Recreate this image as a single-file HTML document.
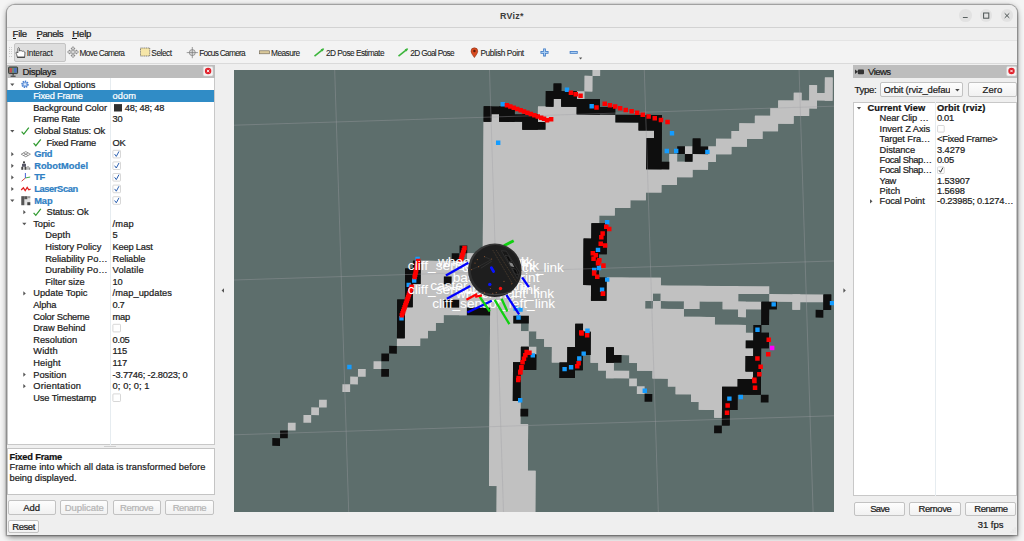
<!DOCTYPE html>
<html><head><meta charset="utf-8"><title>RViz*</title>
<style>
html,body{margin:0;padding:0;}
body{width:1024px;height:541px;overflow:hidden;background:#f4f4f4;font-family:"Liberation Sans",sans-serif;position:relative;}
.t{position:absolute;white-space:nowrap;-webkit-text-stroke:0.22px currentColor;}
.r{position:absolute;}
svg{position:absolute;overflow:visible;}
</style></head><body>
<div class="r" style="left:6.7px;top:5.4px;width:1010.4px;height:529.6px;background:#efefef;border-radius:8px 8px 0 0;box-shadow:0 0 0 1.300px rgba(0,0,0,.25),0 3px 6px -1px rgba(0,0,0,.45),0 0 6px rgba(0,0,0,.2);"></div>
<div class="r" style="left:6.70px;top:5.40px;width:1010.40px;height:21.80px;background:#eeeeee;border-radius:8px 8px 0 0;"></div>
<div class="r" style="left:6.70px;top:27.00px;width:1010.40px;height:0.90px;background:#d2d2d2;"></div>
<div class="t" style="left:500.00px;top:10.00px;height:12px;line-height:12px;font-size:8.9px;letter-spacing:0.274px;color:#3c3c3c;font-weight:bold;-webkit-text-stroke:0;">RViz*</div>
<div class="r" style="left:959.00px;top:9.30px;width:12.6px;height:12.6px;border-radius:50%;background:#e2e2e2;"></div>
<div class="r" style="left:979.90px;top:9.30px;width:12.6px;height:12.6px;border-radius:50%;background:#e2e2e2;"></div>
<div class="r" style="left:1000.70px;top:9.30px;width:12.6px;height:12.6px;border-radius:50%;background:#e2e2e2;"></div>
<svg style="left:0;top:0" width="1024" height="60" viewBox="0 0 1024 60" fill="none" stroke="#4a5252" stroke-width="0.9"><path d="M962.9 17.5h4.8"/><rect x="983.6" y="13.0" width="5.2" height="5.2" stroke-width="1.0"/><path d="M1004.7 13.3l4.6 4.6M1009.3 13.3l-4.6 4.6" stroke-width="1.0"/></svg>
<div class="r" style="left:6.70px;top:27.90px;width:1010.40px;height:12.60px;background:#efefef;"></div>
<div class="t" style="left:12.60px;top:27.90px;height:12px;line-height:12px;font-size:9.6px;letter-spacing:-0.317px;color:#1a1a1a;">File</div>
<div class="t" style="left:36.50px;top:27.90px;height:12px;line-height:12px;font-size:9.6px;letter-spacing:-0.459px;color:#1a1a1a;">Panels</div>
<div class="t" style="left:72.30px;top:27.90px;height:12px;line-height:12px;font-size:9.6px;letter-spacing:-0.211px;color:#1a1a1a;">Help</div>
<div class="r" style="left:12.60px;top:38.30px;width:3.60px;height:0.80px;background:#1a1a1a;"></div>
<div class="r" style="left:36.50px;top:38.30px;width:3.90px;height:0.80px;background:#1a1a1a;"></div>
<div class="r" style="left:72.30px;top:38.30px;width:4.60px;height:0.80px;background:#1a1a1a;"></div>
<div class="r" style="left:6.70px;top:40.60px;width:1010.40px;height:22.60px;background:#f3f3f3;"></div>
<div class="r" style="left:6.70px;top:40.30px;width:1010.40px;height:0.60px;background:#e4e4e4;"></div>
<div class="r" style="left:6.70px;top:63.00px;width:1010.40px;height:0.80px;background:#dadada;"></div>
<div class="r" style="left:9.30px;top:47.40px;width:0.80px;height:10.00px;background:repeating-linear-gradient(#cfcfcf 0 0.900px,transparent 0.900px 1.900px);"></div>
<div class="r" style="left:10.90px;top:47.40px;width:0.80px;height:10.00px;background:repeating-linear-gradient(#cfcfcf 0 0.900px,transparent 0.900px 1.900px);"></div>
<div class="r" style="left:14.20px;top:43.30px;width:51.60px;height:18.40px;background:#dedede;border:0.7px solid #c4c4c4;border-radius:2px;box-sizing:border-box;"></div>
<div class="t" style="left:26.80px;top:46.60px;height:12px;line-height:12px;font-size:8.3px;letter-spacing:-0.235px;color:#222;-webkit-text-stroke:0.08px currentColor;">Interact</div>
<div class="t" style="left:79.60px;top:46.60px;height:12px;line-height:12px;font-size:8.3px;letter-spacing:-0.674px;color:#222;-webkit-text-stroke:0.08px currentColor;">Move Camera</div>
<div class="t" style="left:151.30px;top:46.60px;height:12px;line-height:12px;font-size:8.3px;letter-spacing:-0.445px;color:#222;-webkit-text-stroke:0.08px currentColor;">Select</div>
<div class="t" style="left:199.20px;top:46.60px;height:12px;line-height:12px;font-size:8.3px;letter-spacing:-0.719px;color:#222;-webkit-text-stroke:0.08px currentColor;">Focus Camera</div>
<div class="t" style="left:271.00px;top:46.60px;height:12px;line-height:12px;font-size:8.3px;letter-spacing:-0.527px;color:#222;-webkit-text-stroke:0.08px currentColor;">Measure</div>
<div class="t" style="left:326.00px;top:46.60px;height:12px;line-height:12px;font-size:8.3px;letter-spacing:-0.527px;color:#222;-webkit-text-stroke:0.08px currentColor;">2D Pose Estimate</div>
<div class="t" style="left:410.20px;top:46.60px;height:12px;line-height:12px;font-size:8.3px;letter-spacing:-0.656px;color:#222;-webkit-text-stroke:0.08px currentColor;">2D Goal Pose</div>
<div class="t" style="left:480.40px;top:46.60px;height:12px;line-height:12px;font-size:8.3px;letter-spacing:-0.388px;color:#222;-webkit-text-stroke:0.08px currentColor;">Publish Point</div>
<svg style="left:0;top:0" width="1024" height="70" viewBox="0 0 1024 70"><path d="M17.400 57.300L16.700 54.600L16.000 53.100Q15.900 52.000 17.000 52.100L17.900 53.000V48.300Q18.600 47.000 19.400 48.300V51.000Q20.200 50.000 21.000 51.000Q21.800 50.300 22.600 51.300Q23.500 50.700 24.200 51.800Q25.000 51.600 25.000 52.800L24.600 57.300z" fill="#fff" stroke="#444" stroke-width="0.800" stroke-linejoin="round"/><path d="M17.200 57.300h7.600" stroke="#444" stroke-width="1.200"/><g fill="#e9e9e9" stroke="#555" stroke-width="0.6"><path d="M73 46.6l2 2.200h-1.200v2.300h2.500v-1.100l2.200 2-2.200 2v-1.100h-2.500v2.500h1.200l-2 2.200-2-2.200h1.200v-2.500h-2.500v1.100l-2.200-2 2.200-2v1.100h2.500v-2.300h-1.200z"/></g><rect x="140.500" y="48.0" width="9.200" height="8.0" fill="#f6e6a8" stroke="#555" stroke-width="0.7" stroke-dasharray="1.2 0.600"/><g fill="none" stroke="#777" stroke-width="0.7"><circle cx="192.300" cy="52.6" r="3.0" fill="#ddd"/><path d="M192.300 47v11.200M186.700 52.6h11.200"/></g><rect x="259.500" y="50.8" width="10.0" height="3.0" fill="#d9c89a" stroke="#6a6250" stroke-width="0.6"/><path d="M314.500 56.2l8.800-7" stroke="#3cb53c" stroke-width="1.6" fill="none"/><path d="M324.200 48.300l-3.600.9 2 2.400z" fill="#3cb53c"/><path d="M398.500 56.2l8.800-7" stroke="#3cb53c" stroke-width="1.6" fill="none"/><path d="M408.200 48.300l-3.600.9 2 2.400z" fill="#3cb53c"/><path d="M474.400 57.6q-3.400-4.400-3.400-6.400a3.300 3.300 0 0 1 6.800 0q0 2-3.400 6.400z" fill="#d84a20" stroke="#7a2a10" stroke-width="0.5"/><circle cx="474.400" cy="51.0" r="1.2" fill="#5a1a08"/><path d="M544.500 48.4v8.000M540.500 52.4h8.000" stroke="#3a77c4" stroke-width="2.700" fill="none"/><path d="M544.500 49.2v6.400M541.300 52.4h6.400" stroke="#a9cdf2" stroke-width="1.200" fill="none"/><path d="M569.700 52.4h8.000" stroke="#3a77c4" stroke-width="2.700" fill="none"/><path d="M570.500 52.4h6.400" stroke="#a9cdf2" stroke-width="1.200" fill="none"/><path d="M579.0 57.6h3.200l-1.600 1.800z" fill="#555"/></svg>
<div class="r" style="left:6.90px;top:65.00px;width:207.70px;height:13.40px;background:#bdbdbd;"></div>
<div class="t" style="left:22.40px;top:65.90px;height:12px;line-height:12px;font-size:9.6px;letter-spacing:-0.334px;color:#1a1a1a;">Displays</div>
<svg style="left:0;top:0" width="240" height="90" viewBox="0 0 240 90"><rect x="8.6" y="67.0" width="9.0" height="6.6" rx="0.8" fill="#6a8a7a" stroke="#2a2a2a" stroke-width="0.9"/><rect x="9.600" y="68.0" width="2.400" height="4.600" fill="#c05050"/><rect x="14.0" y="68.0" width="2.600" height="4.600" fill="#5070c0"/><path d="M13.100 73.800v1.800M10.600 76.200h5" stroke="#2a2a2a" stroke-width="1.0"/><rect x="203.200" y="66.6" width="9.800" height="9.400" rx="1.4" fill="#f4f4f4" stroke="#cfcfcf" stroke-width="0.5"/><circle cx="208.100" cy="71.0" r="3.200" fill="#e0202a"/><path d="M206.900 69.800l2.400 2.400M209.300 69.800l-2.400 2.400" stroke="#fff" stroke-width="0.900"/></svg>
<div class="r" style="left:6.90px;top:78.40px;width:207.70px;height:366.80px;background:#ffffff;border:0.6px solid #c8c8c8;border-top:none;box-sizing:border-box;"></div>
<div class="r" style="left:110.40px;top:78.40px;width:0.70px;height:366.40px;background:#e6ecf0;"></div>
<div class="r" style="left:7.20px;top:90.20px;width:207.00px;height:11.60px;background:#308cc6;"></div>
<div class="t" style="left:34.20px;top:78.60px;height:12px;line-height:12px;font-size:9.3px;letter-spacing:-0.015px;color:#1b1b1b;">Global Options</div>
<div class="t" style="left:33.20px;top:90.20px;height:12px;line-height:12px;font-size:9.3px;letter-spacing:-0.254px;color:#ffffff;">Fixed Frame</div>
<div class="t" style="left:112.60px;top:90.20px;height:12px;line-height:12px;font-size:9.3px;letter-spacing:0.085px;color:#fff;">odom</div>
<div class="t" style="left:33.20px;top:101.80px;height:12px;line-height:12px;font-size:9.3px;letter-spacing:-0.040px;color:#1b1b1b;">Background Color</div>
<div class="t" style="left:124.80px;top:101.80px;height:12px;line-height:12px;font-size:9.3px;letter-spacing:-0.196px;color:#1b1b1b;">48; 48; 48</div>
<div class="t" style="left:33.20px;top:113.40px;height:12px;line-height:12px;font-size:9.3px;letter-spacing:-0.249px;color:#1b1b1b;">Frame Rate</div>
<div class="t" style="left:112.60px;top:113.40px;height:12px;line-height:12px;font-size:9.3px;letter-spacing:-0.372px;color:#1b1b1b;">30</div>
<div class="t" style="left:34.20px;top:125.00px;height:12px;line-height:12px;font-size:9.3px;letter-spacing:-0.111px;color:#1b1b1b;">Global Status: Ok</div>
<div class="t" style="left:46.60px;top:136.60px;height:12px;line-height:12px;font-size:9.3px;letter-spacing:-0.254px;color:#1b1b1b;">Fixed Frame</div>
<div class="t" style="left:112.60px;top:136.60px;height:12px;line-height:12px;font-size:9.3px;letter-spacing:-0.419px;color:#1b1b1b;">OK</div>
<div class="t" style="left:34.20px;top:148.20px;height:12px;line-height:12px;font-size:9.3px;letter-spacing:-0.279px;color:#2f7fc4;font-weight:bold;">Grid</div>
<div class="t" style="left:34.20px;top:159.80px;height:12px;line-height:12px;font-size:9.3px;letter-spacing:0.008px;color:#2f7fc4;font-weight:bold;">RobotModel</div>
<div class="t" style="left:34.20px;top:171.40px;height:12px;line-height:12px;font-size:9.3px;letter-spacing:-0.380px;color:#2f7fc4;font-weight:bold;">TF</div>
<div class="t" style="left:34.20px;top:183.00px;height:12px;line-height:12px;font-size:9.3px;letter-spacing:-0.382px;color:#2f7fc4;font-weight:bold;">LaserScan</div>
<div class="t" style="left:34.20px;top:194.60px;height:12px;line-height:12px;font-size:9.3px;letter-spacing:-0.066px;color:#2f7fc4;font-weight:bold;">Map</div>
<div class="t" style="left:46.60px;top:206.20px;height:12px;line-height:12px;font-size:9.3px;letter-spacing:-0.162px;color:#1b1b1b;">Status: Ok</div>
<div class="t" style="left:33.20px;top:217.80px;height:12px;line-height:12px;font-size:9.3px;letter-spacing:-0.022px;color:#1b1b1b;">Topic</div>
<div class="t" style="left:112.60px;top:217.80px;height:12px;line-height:12px;font-size:9.3px;letter-spacing:0.132px;color:#1b1b1b;">/map</div>
<div class="t" style="left:45.20px;top:229.40px;height:12px;line-height:12px;font-size:9.3px;letter-spacing:0.117px;color:#1b1b1b;">Depth</div>
<div class="t" style="left:112.60px;top:229.40px;height:12px;line-height:12px;font-size:9.3px;color:#1b1b1b;">5</div>
<div class="t" style="left:45.20px;top:241.00px;height:12px;line-height:12px;font-size:9.3px;letter-spacing:-0.009px;color:#1b1b1b;">History Policy</div>
<div class="t" style="left:112.60px;top:241.00px;height:12px;line-height:12px;font-size:9.3px;letter-spacing:-0.209px;color:#1b1b1b;">Keep Last</div>
<div class="t" style="left:45.20px;top:252.60px;height:12px;line-height:12px;font-size:9.3px;letter-spacing:-0.044px;color:#1b1b1b;">Reliability Po…</div>
<div class="t" style="left:112.60px;top:252.60px;height:12px;line-height:12px;font-size:9.3px;letter-spacing:-0.125px;color:#1b1b1b;">Reliable</div>
<div class="t" style="left:45.20px;top:264.20px;height:12px;line-height:12px;font-size:9.3px;letter-spacing:0.027px;color:#1b1b1b;">Durability Po…</div>
<div class="t" style="left:112.60px;top:264.20px;height:12px;line-height:12px;font-size:9.3px;letter-spacing:0.151px;color:#1b1b1b;">Volatile</div>
<div class="t" style="left:45.20px;top:275.80px;height:12px;line-height:12px;font-size:9.3px;letter-spacing:-0.017px;color:#1b1b1b;">Filter size</div>
<div class="t" style="left:112.60px;top:275.80px;height:12px;line-height:12px;font-size:9.3px;letter-spacing:-0.372px;color:#1b1b1b;">10</div>
<div class="t" style="left:33.20px;top:287.40px;height:12px;line-height:12px;font-size:9.3px;letter-spacing:0.007px;color:#1b1b1b;">Update Topic</div>
<div class="t" style="left:112.60px;top:287.40px;height:12px;line-height:12px;font-size:9.3px;letter-spacing:0.039px;color:#1b1b1b;">/map_updates</div>
<div class="t" style="left:33.20px;top:299.00px;height:12px;line-height:12px;font-size:9.3px;letter-spacing:-0.117px;color:#1b1b1b;">Alpha</div>
<div class="t" style="left:112.60px;top:299.00px;height:12px;line-height:12px;font-size:9.3px;letter-spacing:-0.376px;color:#1b1b1b;">0.7</div>
<div class="t" style="left:33.20px;top:310.60px;height:12px;line-height:12px;font-size:9.3px;letter-spacing:-0.210px;color:#1b1b1b;">Color Scheme</div>
<div class="t" style="left:112.60px;top:310.60px;height:12px;line-height:12px;font-size:9.3px;letter-spacing:-0.230px;color:#1b1b1b;">map</div>
<div class="t" style="left:33.20px;top:322.20px;height:12px;line-height:12px;font-size:9.3px;letter-spacing:-0.095px;color:#1b1b1b;">Draw Behind</div>
<div class="t" style="left:33.20px;top:333.80px;height:12px;line-height:12px;font-size:9.3px;letter-spacing:0.006px;color:#1b1b1b;">Resolution</div>
<div class="t" style="left:112.60px;top:333.80px;height:12px;line-height:12px;font-size:9.3px;letter-spacing:-0.325px;color:#1b1b1b;">0.05</div>
<div class="t" style="left:33.20px;top:345.40px;height:12px;line-height:12px;font-size:9.3px;letter-spacing:0.166px;color:#1b1b1b;">Width</div>
<div class="t" style="left:112.60px;top:345.40px;height:12px;line-height:12px;font-size:9.3px;letter-spacing:-0.075px;color:#1b1b1b;">115</div>
<div class="t" style="left:33.20px;top:357.00px;height:12px;line-height:12px;font-size:9.3px;letter-spacing:0.086px;color:#1b1b1b;">Height</div>
<div class="t" style="left:112.60px;top:357.00px;height:12px;line-height:12px;font-size:9.3px;letter-spacing:-0.075px;color:#1b1b1b;">117</div>
<div class="t" style="left:33.20px;top:368.60px;height:12px;line-height:12px;font-size:9.3px;letter-spacing:0.014px;color:#1b1b1b;">Position</div>
<div class="t" style="left:112.60px;top:368.60px;height:12px;line-height:12px;font-size:9.3px;letter-spacing:-0.189px;color:#1b1b1b;">-3.7746; -2.8023; 0</div>
<div class="t" style="left:33.20px;top:380.20px;height:12px;line-height:12px;font-size:9.3px;letter-spacing:0.228px;color:#1b1b1b;">Orientation</div>
<div class="t" style="left:112.60px;top:380.20px;height:12px;line-height:12px;font-size:9.3px;letter-spacing:0.081px;color:#1b1b1b;">0; 0; 0; 1</div>
<div class="t" style="left:33.20px;top:391.80px;height:12px;line-height:12px;font-size:9.3px;letter-spacing:-0.123px;color:#1b1b1b;">Use Timestamp</div>
<svg style="left:0;top:0" width="240" height="460" viewBox="0 0 240 460"><path d="M10.20 83.60h4.2l-2.100 2.500z" fill="#555"/><circle cx="25.0" cy="84.30" r="2.900" fill="#8fb4e6" stroke="#4a7fd0" stroke-width="1.700" stroke-dasharray="1.300 0.900"/><circle cx="25.0" cy="84.30" r="1.0" fill="#e8f0fc"/><rect x="114.0" y="104.10" width="8.0" height="7.400" fill="#303030"/><path d="M10.20 130.00h4.2l-2.100 2.500z" fill="#555"/><path d="M21.60 131.60l2.200 2.500 5.000-6.400" fill="none" stroke="#2f9a2f" stroke-width="1.25"/><path d="M33.60 143.20l2.200 2.500 5.000-6.400" fill="none" stroke="#2f9a2f" stroke-width="1.25"/><path d="M11.30 152.10v4.200l2.500-2.100z" fill="#555"/><rect x="112.90" y="150.30" width="7.600" height="7.600" rx="0.800" fill="#fff" stroke="#c6c6c6" stroke-width="0.700"/><path d="M114.60 154.10l1.700 2.300 2.700-5.000" fill="none" stroke="#2a5fb0" stroke-width="1.0"/><g fill="none" stroke="#555" stroke-width="0.600"><path d="M21.2 154.20l4.600-2.600 4.600 2.600-4.600 2.600z"/><path d="M23.500 152.90l4.600 2.600M28.100 152.90l-4.600 2.600"/></g><path d="M11.30 163.70v4.200l2.500-2.100z" fill="#555"/><rect x="112.90" y="161.90" width="7.600" height="7.600" rx="0.800" fill="#fff" stroke="#c6c6c6" stroke-width="0.700"/><path d="M114.60 165.70l1.700 2.300 2.700-5.000" fill="none" stroke="#2a5fb0" stroke-width="1.0"/><g fill="#444"><rect x="23.0" y="161.40" width="2.0" height="2.0"/><rect x="22.0" y="163.80" width="4.0" height="3.0" fill="#5a5a6a"/><rect x="21.3" y="166.80" width="2.0" height="3.0"/><rect x="24.500" y="166.80" width="2.0" height="3.0"/><rect x="27.500" y="166.00" width="1.0" height="3.800" fill="#777"/><rect x="29.2" y="167.40" width="1.0" height="2.400" fill="#777"/></g><path d="M11.30 175.30v4.200l2.500-2.100z" fill="#555"/><rect x="112.90" y="173.50" width="7.600" height="7.600" rx="0.800" fill="#fff" stroke="#c6c6c6" stroke-width="0.700"/><path d="M114.60 177.30l1.700 2.300 2.700-5.000" fill="none" stroke="#2a5fb0" stroke-width="1.0"/><g fill="none" stroke-width="0.900"><path d="M25.400 178.00l-3.800 3.200" stroke="#d03030"/><path d="M25.400 178.00l4.800-1.000" stroke="#30a030"/><path d="M25.400 178.00v-5.000" stroke="#3050d0"/></g><path d="M11.30 186.90v4.200l2.500-2.100z" fill="#555"/><rect x="112.90" y="185.10" width="7.600" height="7.600" rx="0.800" fill="#fff" stroke="#c6c6c6" stroke-width="0.700"/><path d="M114.60 188.90l1.700 2.300 2.700-5.000" fill="none" stroke="#2a5fb0" stroke-width="1.0"/><path d="M21.2 190.00l2.200-2.200 1.800 2.800 2.000-3.200 1.600 2.400 1.800-0.600" fill="none" stroke="#e02020" stroke-width="1.300"/><path d="M10.20 199.60h4.2l-2.100 2.500z" fill="#555"/><rect x="112.90" y="196.70" width="7.600" height="7.600" rx="0.800" fill="#fff" stroke="#c6c6c6" stroke-width="0.700"/><path d="M114.60 200.50l1.700 2.300 2.700-5.000" fill="none" stroke="#2a5fb0" stroke-width="1.0"/><g><rect x="21.3" y="196.20" width="9.0" height="9.0" fill="#e0e0e0"/><rect x="21.3" y="196.20" width="3.0" height="9.0" fill="#555"/><rect x="24.300" y="196.20" width="3.0" height="3.0" fill="#555"/><rect x="27.300" y="202.20" width="3.0" height="3.0" fill="#444"/><rect x="27.300" y="196.20" width="3.0" height="2.0" fill="#999"/></g><path d="M23.30 210.10v4.200l2.500-2.100z" fill="#555"/><path d="M33.60 212.80l2.200 2.500 5.000-6.400" fill="none" stroke="#2f9a2f" stroke-width="1.25"/><path d="M22.20 222.80h4.2l-2.100 2.500z" fill="#555"/><path d="M23.30 291.30v4.200l2.500-2.100z" fill="#555"/><rect x="112.90" y="324.30" width="7.600" height="7.600" rx="0.800" fill="#fff" stroke="#c6c6c6" stroke-width="0.700"/><path d="M23.30 372.50v4.200l2.500-2.100z" fill="#555"/><path d="M23.30 384.10v4.200l2.500-2.100z" fill="#555"/><rect x="112.90" y="393.90" width="7.600" height="7.600" rx="0.800" fill="#fff" stroke="#c6c6c6" stroke-width="0.700"/></svg>
<div class="r" style="left:104.00px;top:446.40px;width:12.00px;height:0.70px;background:#cfcfcf;"></div>
<div class="r" style="left:6.90px;top:448.40px;width:208.10px;height:46.40px;background:#ffffff;border:0.6px solid #c4c4c4;box-sizing:border-box;"></div>
<div class="t" style="left:9.50px;top:450.70px;height:12px;line-height:12px;font-size:9.3px;letter-spacing:-0.199px;color:#111;font-weight:bold;">Fixed Frame</div>
<div class="t" style="left:9.50px;top:461.20px;height:12px;line-height:12px;font-size:9.3px;letter-spacing:0.046px;color:#1b1b1b;">Frame into which all data is transformed before</div>
<div class="t" style="left:9.50px;top:471.70px;height:12px;line-height:12px;font-size:9.3px;letter-spacing:-0.013px;color:#1b1b1b;">being displayed.</div>
<div class="r" style="left:7.70px;top:500.20px;width:47.90px;height:14.40px;background:linear-gradient(#fdfdfd,#f1f1f1);border:0.7px solid #c2c2c2;border-radius:2px;box-sizing:border-box;"></div>
<div class="t" style="left:23.35px;top:501.50px;height:12px;line-height:12px;font-size:9.5px;letter-spacing:-0.101px;color:#1b1b1b;">Add</div>
<div class="r" style="left:60.00px;top:500.20px;width:48.40px;height:14.40px;background:linear-gradient(#fdfdfd,#f1f1f1);border:0.7px solid #c2c2c2;border-radius:2px;box-sizing:border-box;"></div>
<div class="t" style="left:64.70px;top:501.50px;height:12px;line-height:12px;font-size:9.5px;letter-spacing:-0.067px;color:#b4b4b4;">Duplicate</div>
<div class="r" style="left:112.50px;top:500.20px;width:48.10px;height:14.40px;background:linear-gradient(#fdfdfd,#f1f1f1);border:0.7px solid #c2c2c2;border-radius:2px;box-sizing:border-box;"></div>
<div class="t" style="left:120.05px;top:501.50px;height:12px;line-height:12px;font-size:9.5px;letter-spacing:-0.395px;color:#b4b4b4;">Remove</div>
<div class="r" style="left:165.00px;top:500.20px;width:48.70px;height:14.40px;background:linear-gradient(#fdfdfd,#f1f1f1);border:0.7px solid #c2c2c2;border-radius:2px;box-sizing:border-box;"></div>
<div class="t" style="left:172.65px;top:501.50px;height:12px;line-height:12px;font-size:9.5px;letter-spacing:-0.418px;color:#b4b4b4;">Rename</div>
<div class="r" style="left:7.70px;top:519.60px;width:31.80px;height:13.70px;background:linear-gradient(#fdfdfd,#f1f1f1);border:0.7px solid #c2c2c2;border-radius:2px;box-sizing:border-box;"></div>
<div class="t" style="left:12.30px;top:520.55px;height:12px;line-height:12px;font-size:9.5px;letter-spacing:-0.443px;color:#1b1b1b;">Reset</div>
<svg style="left:0;top:0" width="1024" height="541" viewBox="0 0 1024 541"><path d="M224.0 288.300v4.400l-2.400-2.200z" fill="#555"/><path d="M843.4 288.300v4.400l2.400-2.200z" fill="#555"/></svg>
<div class="r" style="left:852.60px;top:65.00px;width:164.50px;height:13.40px;background:#bdbdbd;"></div>
<div class="t" style="left:868.00px;top:65.90px;height:12px;line-height:12px;font-size:9.6px;letter-spacing:-0.567px;color:#1a1a1a;">Views</div>
<svg style="left:0;top:0" width="1024" height="110" viewBox="0 0 1024 110"><rect x="857.8" y="69.4" width="6.2" height="4.800" rx="1.0" fill="#333"/><path d="M855.0 69.6l3.000 2.200-3.000 2.200z" fill="#333"/><rect x="1006.6" y="66.6" width="9.800" height="9.400" rx="1.4" fill="#f4f4f4" stroke="#cfcfcf" stroke-width="0.5"/><circle cx="1011.5" cy="71.0" r="3.200" fill="#e0202a"/><path d="M1010.3 69.800l2.400 2.400M1012.7 69.800l-2.400 2.400" stroke="#fff" stroke-width="0.900"/><path d="M948.6 89.0h4.200l-2.100 2.400z" fill="#444"/></svg>
<div class="t" style="left:854.60px;top:84.00px;height:12px;line-height:12px;font-size:9.5px;letter-spacing:-0.327px;color:#1b1b1b;">Type:</div>
<div class="r" style="left:880.40px;top:82.40px;width:83.00px;height:14.60px;background:linear-gradient(#fefefe,#f2f2f2);border:0.7px solid #c2c2c2;border-radius:2px;box-sizing:border-box;"></div>
<div class="t" style="left:883.60px;top:84.00px;height:12px;line-height:12px;font-size:9.5px;letter-spacing:-0.206px;color:#1b1b1b;width:66.6px;overflow:hidden;">Orbit (rviz_default)</div>
<svg style="left:0;top:0" width="1024" height="110" viewBox="0 0 1024 110"><path d="M955.2 89.0h4.4l-2.2 2.500z" fill="#444"/></svg>
<div class="r" style="left:968.00px;top:82.40px;width:48.80px;height:14.60px;background:linear-gradient(#fdfdfd,#f1f1f1);border:0.7px solid #c2c2c2;border-radius:2px;box-sizing:border-box;"></div>
<div class="t" style="left:982.60px;top:83.80px;height:12px;line-height:12px;font-size:9.5px;letter-spacing:0.017px;color:#1b1b1b;">Zero</div>
<div class="r" style="left:852.60px;top:101.80px;width:164.50px;height:394.60px;background:#ffffff;border:0.6px solid #c8c8c8;box-sizing:border-box;"></div>
<div class="r" style="left:934.90px;top:102.40px;width:0.70px;height:393.60px;background:#e6ecf0;"></div>
<div class="t" style="left:867.60px;top:102.08px;height:12px;line-height:12px;font-size:9.3px;letter-spacing:0.034px;color:#111;font-weight:bold;">Current View</div>
<div class="t" style="left:937.00px;top:102.08px;height:12px;line-height:12px;font-size:9.3px;letter-spacing:0.115px;color:#111;font-weight:bold;">Orbit (rviz)</div>
<div class="t" style="left:879.60px;top:112.44px;height:12px;line-height:12px;font-size:9.3px;letter-spacing:-0.149px;color:#1b1b1b;">Near Clip …</div>
<div class="t" style="left:937.00px;top:112.44px;height:12px;line-height:12px;font-size:9.3px;letter-spacing:-0.325px;color:#1b1b1b;">0.01</div>
<div class="t" style="left:879.60px;top:122.80px;height:12px;line-height:12px;font-size:9.3px;letter-spacing:-0.043px;color:#1b1b1b;">Invert Z Axis</div>
<div class="t" style="left:879.60px;top:133.16px;height:12px;line-height:12px;font-size:9.3px;letter-spacing:-0.098px;color:#1b1b1b;">Target Fra…</div>
<div class="t" style="left:937.00px;top:133.16px;height:12px;line-height:12px;font-size:9.3px;letter-spacing:-0.204px;color:#1b1b1b;">&lt;Fixed Frame&gt;</div>
<div class="t" style="left:879.60px;top:143.52px;height:12px;line-height:12px;font-size:9.3px;letter-spacing:-0.098px;color:#1b1b1b;">Distance</div>
<div class="t" style="left:937.00px;top:143.52px;height:12px;line-height:12px;font-size:9.3px;letter-spacing:-0.074px;color:#1b1b1b;">3.4279</div>
<div class="t" style="left:879.60px;top:153.88px;height:12px;line-height:12px;font-size:9.3px;letter-spacing:-0.377px;color:#1b1b1b;">Focal Shap…</div>
<div class="t" style="left:937.00px;top:153.88px;height:12px;line-height:12px;font-size:9.3px;letter-spacing:-0.325px;color:#1b1b1b;">0.05</div>
<div class="t" style="left:879.60px;top:164.24px;height:12px;line-height:12px;font-size:9.3px;letter-spacing:-0.377px;color:#1b1b1b;">Focal Shap…</div>
<div class="t" style="left:879.60px;top:174.60px;height:12px;line-height:12px;font-size:9.3px;letter-spacing:-0.334px;color:#1b1b1b;">Yaw</div>
<div class="t" style="left:937.00px;top:174.60px;height:12px;line-height:12px;font-size:9.3px;letter-spacing:-0.116px;color:#1b1b1b;">1.53907</div>
<div class="t" style="left:879.60px;top:184.96px;height:12px;line-height:12px;font-size:9.3px;letter-spacing:-0.015px;color:#1b1b1b;">Pitch</div>
<div class="t" style="left:937.00px;top:184.96px;height:12px;line-height:12px;font-size:9.3px;letter-spacing:-0.107px;color:#1b1b1b;">1.5698</div>
<div class="t" style="left:879.60px;top:195.32px;height:12px;line-height:12px;font-size:9.3px;letter-spacing:-0.138px;color:#1b1b1b;">Focal Point</div>
<div class="t" style="left:937.00px;top:195.32px;height:12px;line-height:12px;font-size:9.3px;letter-spacing:-0.189px;color:#1b1b1b;">-0.23985; 0.1274…</div>
<svg style="left:0;top:0" width="1024" height="541" viewBox="0 0 1024 541"><path d="M856.90 107.08h4.2l-2.100 2.500z" fill="#555"/><rect x="937.6" y="125.50" width="6.600" height="6.600" rx="0.700" fill="#fff" stroke="#c6c6c6" stroke-width="0.700"/><rect x="937.6" y="166.94" width="6.600" height="6.600" rx="0.700" fill="#fff" stroke="#c6c6c6" stroke-width="0.700"/><path d="M939.0 170.24l1.500 2.000 2.400-4.600" fill="none" stroke="#222" stroke-width="0.900"/><path d="M870.00 199.22v4.200l2.500-2.100z" fill="#555"/></svg>
<div class="r" style="left:854.00px;top:501.50px;width:51.40px;height:14.40px;background:linear-gradient(#fdfdfd,#f1f1f1);border:0.7px solid #c2c2c2;border-radius:2px;box-sizing:border-box;"></div>
<div class="t" style="left:870.20px;top:502.80px;height:12px;line-height:12px;font-size:9.5px;letter-spacing:-0.663px;color:#1b1b1b;">Save</div>
<div class="r" style="left:909.30px;top:501.50px;width:51.30px;height:14.40px;background:linear-gradient(#fdfdfd,#f1f1f1);border:0.7px solid #c2c2c2;border-radius:2px;box-sizing:border-box;"></div>
<div class="t" style="left:918.45px;top:502.80px;height:12px;line-height:12px;font-size:9.5px;letter-spacing:-0.395px;color:#1b1b1b;">Remove</div>
<div class="r" style="left:965.30px;top:501.50px;width:51.20px;height:14.40px;background:linear-gradient(#fdfdfd,#f1f1f1);border:0.7px solid #c2c2c2;border-radius:2px;box-sizing:border-box;"></div>
<div class="t" style="left:974.20px;top:502.80px;height:12px;line-height:12px;font-size:9.5px;letter-spacing:-0.418px;color:#1b1b1b;">Rename</div>
<div class="t" style="left:977.80px;top:518.60px;height:12px;line-height:12px;font-size:9.5px;letter-spacing:-0.046px;color:#1b1b1b;">31 fps</div>
<svg style="left:0;top:0" width="1024" height="541" viewBox="0 0 1024 541"><g fill="#d8d8d8"><rect x="1014.6" y="527.6" width="1" height="1"/><rect x="1012.6" y="529.6" width="1" height="1"/><rect x="1014.6" y="529.6" width="1" height="1"/><rect x="1010.6" y="531.6" width="1" height="1"/><rect x="1012.6" y="531.6" width="1" height="1"/><rect x="1014.6" y="531.6" width="1" height="1"/></g></svg>
<div class="r" style="left:234.00px;top:70.00px;width:599.70px;height:441.50px;background:#5d6e6c;"></div>
<svg style="left:234.0px;top:70.0px;overflow:hidden" width="599.7" height="441.5" viewBox="234.0 70.0 599.7 441.5"><rect x="234.0" y="70.0" width="599.7" height="441.5" fill="#5d6e6c"/><g transform="translate(235.97 65.85) rotate(0.372)"><path d="M356.5 0h7.75v7.75h-7.75zM348.75 7.75h7.75v7.75h-7.75zM589 7.75h7.75v7.75h-7.75zM348.75 15.5h7.75v7.75h-7.75zM573.5 15.5h7.75v7.75h-7.75zM589 15.5h7.75v7.75h-7.75zM341 23.25h7.75v7.75h-7.75zM558 23.25h7.75v7.75h-7.75zM573.5 23.25h23.25v7.75h-23.25zM317.75 31h7.75v7.75h-7.75zM542.5 31h38.75v7.75h-38.75zM302.25 38.75h38.75v7.75h-38.75zM534.75 38.75h38.75v7.75h-38.75zM255.75 46.5h7.75v7.75h-7.75zM302.25 46.5h77.5v7.75h-77.5zM519.25 46.5h38.75v7.75h-38.75zM248 54.25h38.75v7.75h-38.75zM310 54.25h93v7.75h-93zM503.75 54.25h38.75v7.75h-38.75zM248 62h170.5v7.75h-170.5zM496 62h31v7.75h-31zM248 69.75h162.75v7.75h-162.75zM480.5 69.75h31v7.75h-31zM248 77.5h162.75v7.75h-162.75zM449.5 77.5h7.75v7.75h-7.75zM472.75 77.5h23.25v7.75h-23.25zM248 85.25h162.75v7.75h-162.75zM434 85.25h7.75v7.75h-7.75zM457.25 85.25h23.25v7.75h-23.25zM248 93h162.75v7.75h-162.75zM434 93h38.75v7.75h-38.75zM248 100.75h209.25v7.75h-209.25zM248 108.5h193.75v7.75h-193.75zM248 116.25h178.25v7.75h-178.25zM248 124h162.75v7.75h-162.75zM248 131.75h147.25v7.75h-147.25zM248 139.5h131.75v7.75h-131.75zM248 147.25h116.25v7.75h-116.25zM248 155h108.5v7.75h-108.5zM248 162.75h108.5v7.75h-108.5zM248 170.5h100.75v7.75h-100.75zM248 178.25h100.75v7.75h-100.75zM232.5 186h116.25v7.75h-116.25zM186 193.75h162.75v7.75h-162.75zM186 201.5h162.75v7.75h-162.75zM186 209.25h23.25v7.75h-23.25zM217 209.25h131.75v7.75h-131.75zM372 209.25h54.25v7.75h-54.25zM178.25 217h178.25v7.75h-178.25zM372 217h162.75v7.75h-162.75zM178.25 224.75h178.25v7.75h-178.25zM372 224.75h46.5v7.75h-46.5zM426.25 224.75h77.5v7.75h-77.5zM534.75 224.75h54.25v7.75h-54.25zM178.25 232.5h31v7.75h-31zM224.75 232.5h186v7.75h-186zM418.5 232.5h7.75v7.75h-7.75zM449.5 232.5h15.5v7.75h-15.5zM488.25 232.5h38.75v7.75h-38.75zM558 232.5h7.75v7.75h-7.75zM170.5 240.25h62v7.75h-62zM255.75 240.25h193.75v7.75h-193.75zM503.75 240.25h7.75v7.75h-7.75zM170.5 248h38.75v7.75h-38.75zM255.75 248h23.25v7.75h-23.25zM294.5 248h186v7.75h-186zM170.5 255.75h31v7.75h-31zM255.75 255.75h31v7.75h-31zM294.5 255.75h46.5v7.75h-46.5zM348.75 255.75h162.75v7.75h-162.75zM170.5 263.5h23.25v7.75h-23.25zM255.75 263.5h38.75v7.75h-38.75zM302.25 263.5h38.75v7.75h-38.75zM356.5 263.5h162.75v7.75h-162.75zM162.75 271.25h23.25v7.75h-23.25zM255.75 271.25h38.75v7.75h-38.75zM310 271.25h31v7.75h-31zM356.5 271.25h155v7.75h-155zM255.75 279h31v7.75h-31zM294.5 279h7.75v7.75h-7.75zM317.75 279h15.5v7.75h-15.5zM356.5 279h15.5v7.75h-15.5zM379.75 279h139.5v7.75h-139.5zM255.75 286.75h31v7.75h-31zM317.75 286.75h15.5v7.75h-15.5zM356.5 286.75h15.5v7.75h-15.5zM395.25 286.75h116.25v7.75h-116.25zM139.5 294.5h7.75v7.75h-7.75zM255.75 294.5h23.25v7.75h-23.25zM364.25 294.5h15.5v7.75h-15.5zM403 294.5h108.5v7.75h-108.5zM124 302.25h7.75v7.75h-7.75zM255.75 302.25h23.25v7.75h-23.25zM372 302.25h23.25v7.75h-23.25zM418.5 302.25h100.75v7.75h-100.75zM116.25 310h7.75v7.75h-7.75zM255.75 310h23.25v7.75h-23.25zM395.25 310h7.75v7.75h-7.75zM434 310h69.75v7.75h-69.75zM108.5 317.75h7.75v7.75h-7.75zM255.75 317.75h23.25v7.75h-23.25zM403 317.75h7.75v7.75h-7.75zM441.75 317.75h46.5v7.75h-46.5zM255.75 325.5h23.25v7.75h-23.25zM457.25 325.5h31v7.75h-31zM85.25 333.25h7.75v7.75h-7.75zM255.75 333.25h31v7.75h-31zM465 333.25h23.25v7.75h-23.25zM77.5 341h7.75v7.75h-7.75zM255.75 341h31v7.75h-31zM480.5 341h7.75v7.75h-7.75zM69.75 348.75h7.75v7.75h-7.75zM255.75 348.75h31v7.75h-31zM54.25 356.5h7.75v7.75h-7.75zM255.75 356.5h38.75v7.75h-38.75zM255.75 364.25h38.75v7.75h-38.75zM255.75 372h38.75v7.75h-38.75zM255.75 379.75h38.75v7.75h-38.75zM255.75 387.5h38.75v7.75h-38.75zM255.75 395.25h38.75v7.75h-38.75zM255.75 403h46.5v7.75h-46.5zM255.75 410.75h46.5v7.75h-46.5zM263.5 418.5h38.75v7.75h-38.75zM263.5 426.25h38.75v7.75h-38.75zM263.5 434h38.75v7.75h-38.75zM263.5 441.75h38.75v7.75h-38.75zM263.5 449.5h38.75v7.75h-38.75z" fill="#c1c1c1"/><path d="M170.5 240.25h7.75v38.75h-7.75zM178.25 217h7.75v62h-7.75zM186 193.75h7.75v77.5h-7.75zM193.75 193.75h7.75v69.75h-7.75zM201.5 193.75h7.75v62h-7.75zM209.25 193.75h7.75v15.5h-7.75zM209.25 217h7.75v15.5h-7.75zM217 193.75h7.75v38.75h-7.75zM224.75 193.75h7.75v54.25h-7.75zM232.5 186h7.75v54.25h-7.75zM240.25 186h7.75v54.25h-7.75zM248 54.25h7.75v186h-7.75zM255.75 46.5h7.75v372h-7.75zM263.5 54.25h7.75v403h-7.75zM271.25 54.25h7.75v403h-7.75zM279 54.25h7.75v193.75h-7.75zM279 255.75h7.75v38.75h-7.75zM279 333.25h7.75v124h-7.75zM286.75 62h7.75v186h-7.75zM286.75 263.5h7.75v15.5h-7.75zM286.75 356.5h7.75v100.75h-7.75zM294.5 62h7.75v201.5h-7.75zM294.5 403h7.75v54.25h-7.75zM302.25 38.75h7.75v15.5h-7.75zM302.25 62h7.75v209.25h-7.75zM310 38.75h7.75v240.25h-7.75zM317.75 31h7.75v263.5h-7.75zM325.5 38.75h7.75v255.75h-7.75zM333.25 38.75h7.75v240.25h-7.75zM341 46.5h7.75v209.25h-7.75zM348.75 7.75h7.75v15.5h-7.75zM348.75 46.5h7.75v124h-7.75zM348.75 217h7.75v46.5h-7.75zM356.5 46.5h7.75v108.5h-7.75zM356.5 232.5h7.75v62h-7.75zM364.25 46.5h7.75v100.75h-7.75zM364.25 232.5h7.75v69.75h-7.75zM372 46.5h7.75v100.75h-7.75zM372 209.25h7.75v69.75h-7.75zM372 294.5h7.75v15.5h-7.75zM379.75 54.25h7.75v85.25h-7.75zM379.75 209.25h7.75v77.5h-7.75zM387.5 54.25h7.75v85.25h-7.75zM387.5 209.25h7.75v77.5h-7.75zM395.25 54.25h7.75v77.5h-7.75zM395.25 209.25h7.75v85.25h-7.75zM403 62h7.75v69.75h-7.75zM403 209.25h7.75v93h-7.75zM410.75 100.75h7.75v23.25h-7.75zM410.75 209.25h7.75v23.25h-7.75zM410.75 240.25h7.75v62h-7.75zM418.5 100.75h7.75v23.25h-7.75zM418.5 209.25h7.75v15.5h-7.75zM418.5 232.5h7.75v77.5h-7.75zM426.25 100.75h7.75v15.5h-7.75zM426.25 217h7.75v15.5h-7.75zM426.25 240.25h7.75v69.75h-7.75zM434 85.25h7.75v31h-7.75zM434 217h7.75v15.5h-7.75zM434 240.25h7.75v77.5h-7.75zM441.75 93h7.75v15.5h-7.75zM441.75 217h7.75v15.5h-7.75zM441.75 240.25h7.75v85.25h-7.75zM449.5 93h7.75v15.5h-7.75zM449.5 217h7.75v23.25h-7.75zM449.5 248h7.75v77.5h-7.75zM457.25 85.25h7.75v15.5h-7.75zM457.25 217h7.75v23.25h-7.75zM457.25 248h7.75v85.25h-7.75zM465 85.25h7.75v15.5h-7.75zM465 217h7.75v15.5h-7.75zM465 248h7.75v93h-7.75zM472.75 77.5h7.75v15.5h-7.75zM472.75 217h7.75v15.5h-7.75zM472.75 248h7.75v93h-7.75zM480.5 69.75h7.75v15.5h-7.75zM480.5 217h7.75v15.5h-7.75zM480.5 255.75h7.75v93h-7.75zM488.25 69.75h7.75v15.5h-7.75zM488.25 217h7.75v23.25h-7.75zM488.25 255.75h7.75v62h-7.75zM496 62h7.75v15.5h-7.75zM496 217h7.75v23.25h-7.75zM496 255.75h7.75v62h-7.75zM503.75 54.25h7.75v23.25h-7.75zM503.75 232.5h7.75v15.5h-7.75zM503.75 255.75h7.75v54.25h-7.75zM511.5 54.25h7.75v15.5h-7.75zM519.25 46.5h7.75v23.25h-7.75zM527 46.5h7.75v15.5h-7.75zM534.75 38.75h7.75v23.25h-7.75zM542.5 31h7.75v23.25h-7.75zM550.25 31h7.75v23.25h-7.75zM558 23.25h7.75v23.25h-7.75zM558 224.75h7.75v15.5h-7.75zM565.75 31h7.75v15.5h-7.75zM573.5 15.5h7.75v23.25h-7.75zM589 7.75h7.75v23.25h-7.75z" fill="#c1c1c1"/><path d="M317.75 15.5h7.75v7.75h-7.75zM310 23.25h31v7.75h-31zM310 31h7.75v7.75h-7.75zM325.5 31h38.75v7.75h-38.75zM248 38.75h31v7.75h-31zM341 38.75h38.75v7.75h-38.75zM248 46.5h7.75v7.75h-7.75zM263.5 46.5h38.75v7.75h-38.75zM379.75 46.5h46.5v7.75h-46.5zM286.75 54.25h23.25v7.75h-23.25zM403 54.25h23.25v7.75h-23.25zM418.5 62h7.75v7.75h-7.75zM410.75 69.75h15.5v7.75h-15.5zM457.25 69.75h7.75v7.75h-7.75zM410.75 77.5h15.5v7.75h-15.5zM441.75 77.5h7.75v7.75h-7.75zM457.25 77.5h15.5v7.75h-15.5zM410.75 85.25h15.5v7.75h-15.5zM449.5 85.25h7.75v7.75h-7.75zM410.75 93h23.25v7.75h-23.25zM356.5 155h15.5v7.75h-15.5zM356.5 162.75h15.5v7.75h-15.5zM348.75 170.5h23.25v7.75h-23.25zM224.75 178.25h7.75v7.75h-7.75zM348.75 178.25h23.25v7.75h-23.25zM217 186h7.75v7.75h-7.75zM348.75 186h15.5v7.75h-15.5zM178.25 193.75h7.75v7.75h-7.75zM348.75 193.75h15.5v7.75h-15.5zM170.5 201.5h15.5v7.75h-15.5zM348.75 201.5h15.5v7.75h-15.5zM170.5 209.25h15.5v7.75h-15.5zM209.25 209.25h7.75v7.75h-7.75zM348.75 209.25h23.25v7.75h-23.25zM170.5 217h7.75v7.75h-7.75zM356.5 217h15.5v7.75h-15.5zM170.5 224.75h7.75v7.75h-7.75zM356.5 224.75h15.5v7.75h-15.5zM589 224.75h7.75v7.75h-7.75zM162.75 232.5h15.5v7.75h-15.5zM209.25 232.5h15.5v7.75h-15.5zM527 232.5h15.5v7.75h-15.5zM589 232.5h7.75v7.75h-7.75zM162.75 240.25h7.75v7.75h-7.75zM232.5 240.25h23.25v7.75h-23.25zM527 240.25h7.75v7.75h-7.75zM581.25 240.25h7.75v7.75h-7.75zM162.75 248h7.75v7.75h-7.75zM279 248h15.5v7.75h-15.5zM527 248h7.75v7.75h-7.75zM162.75 255.75h7.75v7.75h-7.75zM341 255.75h7.75v7.75h-7.75zM519.25 255.75h7.75v7.75h-7.75zM162.75 263.5h7.75v7.75h-7.75zM341 263.5h15.5v7.75h-15.5zM519.25 263.5h15.5v7.75h-15.5zM341 271.25h15.5v7.75h-15.5zM511.5 271.25h23.25v7.75h-23.25zM155 279h7.75v7.75h-7.75zM286.75 279h7.75v7.75h-7.75zM333.25 279h23.25v7.75h-23.25zM372 279h7.75v7.75h-7.75zM519.25 279h7.75v7.75h-7.75zM147.25 286.75h7.75v7.75h-7.75zM286.75 286.75h15.5v7.75h-15.5zM333.25 286.75h15.5v7.75h-15.5zM372 286.75h15.5v7.75h-15.5zM511.5 286.75h15.5v7.75h-15.5zM279 294.5h23.25v7.75h-23.25zM325.5 294.5h23.25v7.75h-23.25zM511.5 294.5h15.5v7.75h-15.5zM147.25 302.25h7.75v7.75h-7.75zM279 302.25h7.75v7.75h-7.75zM325.5 302.25h15.5v7.75h-15.5zM519.25 302.25h7.75v7.75h-7.75zM279 310h7.75v7.75h-7.75zM503.75 310h23.25v7.75h-23.25zM279 317.75h7.75v7.75h-7.75zM488.25 317.75h38.75v7.75h-38.75zM279 325.5h7.75v7.75h-7.75zM410.75 325.5h7.75v7.75h-7.75zM488.25 325.5h15.5v7.75h-15.5zM527 325.5h7.75v7.75h-7.75zM488.25 333.25h15.5v7.75h-15.5zM286.75 341h7.75v7.75h-7.75zM488.25 341h7.75v7.75h-7.75zM488.25 348.75h7.75v7.75h-7.75zM480.5 356.5h7.75v7.75h-7.75zM46.5 364.25h7.75v7.75h-7.75zM38.75 372h7.75v7.75h-7.75z" fill="#0e0e0e"/><path d="M162.75 232.5h7.75v38.75h-7.75zM170.5 201.5h7.75v38.75h-7.75zM178.25 193.75h7.75v23.25h-7.75zM248 38.75h7.75v15.5h-7.75zM263.5 38.75h7.75v15.5h-7.75zM271.25 38.75h7.75v15.5h-7.75zM279 294.5h7.75v38.75h-7.75zM286.75 46.5h7.75v15.5h-7.75zM286.75 279h7.75v23.25h-7.75zM294.5 46.5h7.75v15.5h-7.75zM294.5 286.75h7.75v15.5h-7.75zM310 23.25h7.75v15.5h-7.75zM317.75 15.5h7.75v15.5h-7.75zM325.5 23.25h7.75v15.5h-7.75zM325.5 294.5h7.75v15.5h-7.75zM333.25 23.25h7.75v15.5h-7.75zM333.25 279h7.75v31h-7.75zM341 31h7.75v15.5h-7.75zM341 255.75h7.75v46.5h-7.75zM348.75 31h7.75v15.5h-7.75zM348.75 170.5h7.75v46.5h-7.75zM348.75 263.5h7.75v23.25h-7.75zM356.5 31h7.75v15.5h-7.75zM356.5 155h7.75v77.5h-7.75zM364.25 155h7.75v31h-7.75zM364.25 209.25h7.75v23.25h-7.75zM372 279h7.75v15.5h-7.75zM403 46.5h7.75v15.5h-7.75zM410.75 46.5h7.75v15.5h-7.75zM410.75 69.75h7.75v31h-7.75zM418.5 46.5h7.75v54.25h-7.75zM457.25 69.75h7.75v15.5h-7.75zM488.25 317.75h7.75v38.75h-7.75zM496 317.75h7.75v23.25h-7.75zM503.75 310h7.75v15.5h-7.75zM511.5 286.75h7.75v15.5h-7.75zM511.5 310h7.75v15.5h-7.75zM519.25 255.75h7.75v69.75h-7.75zM527 232.5h7.75v23.25h-7.75zM527 263.5h7.75v15.5h-7.75zM589 224.75h7.75v15.5h-7.75z" fill="#0e0e0e"/></g><path d="M170.39 -230L205.26 870M325.19 -230L360.06 870M479.99 -230L514.86 870M634.79 -230L669.66 870M789.59 -230L824.46 870M944.39 -230L979.26 870M-66 -20.09L1134 -58.13M-66 134.71L1134 96.67M-66 289.51L1134 251.47M-66 444.31L1134 406.27M-66 599.11L1134 561.07" fill="none" stroke="rgba(160,160,164,0.42)" stroke-width="0.9"/><path d="M500.6 102.0h4.4v4.4h-4.4zM496.0 140.6h4.4v4.4h-4.4zM564.8 87.5h4.4v4.4h-4.4zM589.5 104.1h4.4v4.4h-4.4zM669.8 131.0h4.4v4.4h-4.4zM664.6 148.8h4.4v4.4h-4.4zM674.0 148.8h4.4v4.4h-4.4zM705.2 149.7h4.4v4.4h-4.4zM605.0 220.0h4.4v4.4h-4.4zM595.8 247.7h4.4v4.4h-4.4zM596.8 265.8h4.4v4.4h-4.4zM592.0 267.8h4.4v4.4h-4.4zM605.0 277.4h4.4v4.4h-4.4zM599.9 287.6h4.4v4.4h-4.4zM585.2 328.9h4.4v4.4h-4.4zM513.5 306.3h4.4v4.4h-4.4zM518.3 307.4h4.4v4.4h-4.4zM516.3 315.3h4.4v4.4h-4.4zM585.3 328.6h4.4v4.4h-4.4zM581.5 351.4h4.4v4.4h-4.4zM577.1 356.3h4.4v4.4h-4.4zM568.9 365.1h4.4v4.4h-4.4zM562.4 366.9h4.4v4.4h-4.4zM530.6 353.2h4.4v4.4h-4.4zM599.9 287.6h4.4v4.4h-4.4zM518.0 398.0h4.4v4.4h-4.4zM771.5 302.2h4.4v4.4h-4.4zM755.3 327.5h4.4v4.4h-4.4zM829.8 300.9h4.4v4.4h-4.4zM642.6 388.6h4.4v4.4h-4.4zM727.2 396.4h4.4v4.4h-4.4zM738.6 394.8h4.4v4.4h-4.4zM347.2 364.8h4.4v4.4h-4.4zM415.4 256.8h4.4v4.4h-4.4zM412.0 278.3h4.4v4.4h-4.4zM406.5 282.7h4.4v4.4h-4.4zM399.3 316.0h4.4v4.4h-4.4z" fill="#149cff"/><path d="M504.7 103.0h4.5v4.5h-4.5zM508.1 104.3h4.5v4.5h-4.5zM511.5 105.5h4.5v4.5h-4.5zM515.0 106.8h4.5v4.5h-4.5zM518.4 108.0h4.5v4.5h-4.5zM521.8 109.2h4.5v4.5h-4.5zM525.2 110.5h4.5v4.5h-4.5zM528.6 111.7h4.5v4.5h-4.5zM532.1 112.9h4.5v4.5h-4.5zM535.5 114.2h4.5v4.5h-4.5zM538.9 115.4h4.5v4.5h-4.5zM541.8 116.6h4.5v4.5h-4.5zM544.8 118.0h4.5v4.5h-4.5zM548.9 117.0h4.5v4.5h-4.5zM568.7 90.6h4.5v4.5h-4.5zM573.5 92.0h4.5v4.5h-4.5zM578.3 93.4h4.5v4.5h-4.5zM594.3 105.3h4.5v4.5h-4.5zM602.5 101.6h4.5v4.5h-4.5zM607.7 103.0h4.5v4.5h-4.5zM612.9 104.3h4.5v4.5h-4.5zM617.9 106.0h4.5v4.5h-4.5zM623.5 107.7h4.5v4.5h-4.5zM629.4 109.1h4.5v4.5h-4.5zM634.9 110.4h4.5v4.5h-4.5zM640.5 112.4h4.5v4.5h-4.5zM646.4 114.2h4.5v4.5h-4.5zM652.5 115.9h4.5v4.5h-4.5zM658.7 117.7h4.5v4.5h-4.5zM665.3 119.7h4.5v4.5h-4.5zM604.0 224.4h4.5v4.5h-4.5zM607.0 226.7h4.5v4.5h-4.5zM600.4 231.3h4.5v4.5h-4.5zM599.1 235.0h4.5v4.5h-4.5zM598.5 241.5h4.5v4.5h-4.5zM602.9 243.2h4.5v4.5h-4.5zM590.6 251.1h4.5v4.5h-4.5zM593.6 253.1h4.5v4.5h-4.5zM591.3 256.6h4.5v4.5h-4.5zM597.1 257.9h4.5v4.5h-4.5zM595.8 260.9h4.5v4.5h-4.5zM601.2 263.4h4.5v4.5h-4.5zM591.9 270.2h4.5v4.5h-4.5zM596.3 259.4h4.5v4.5h-4.5zM601.2 263.2h4.5v4.5h-4.5zM591.9 271.2h4.5v4.5h-4.5zM595.0 274.4h4.5v4.5h-4.5zM600.8 291.3h4.5v4.5h-4.5zM579.0 330.2h4.5v4.5h-4.5zM579.4 331.3h4.5v4.5h-4.5zM584.9 333.0h4.5v4.5h-4.5zM576.4 360.9h4.5v4.5h-4.5zM575.0 364.1h4.5v4.5h-4.5zM524.4 349.7h4.5v4.5h-4.5zM527.2 350.4h4.5v4.5h-4.5zM523.1 353.1h4.5v4.5h-4.5zM521.7 356.6h4.5v4.5h-4.5zM520.3 360.0h4.5v4.5h-4.5zM519.0 365.5h4.5v4.5h-4.5zM518.3 369.6h4.5v4.5h-4.5zM600.6 291.5h4.5v4.5h-4.5zM519.3 365.0h4.5v4.5h-4.5zM518.0 370.3h4.5v4.5h-4.5zM516.4 375.8h4.5v4.5h-4.5zM516.0 377.8h4.5v4.5h-4.5zM766.5 337.6h4.5v4.5h-4.5zM766.0 352.1h4.5v4.5h-4.5zM755.2 356.3h4.5v4.5h-4.5zM758.4 364.6h4.5v4.5h-4.5zM757.1 372.0h4.5v4.5h-4.5zM752.1 377.4h4.5v4.5h-4.5zM752.2 378.7h4.5v4.5h-4.5zM752.8 385.6h4.5v4.5h-4.5zM725.4 403.2h4.5v4.5h-4.5zM724.8 410.5h4.5v4.5h-4.5zM415.9 258.7h4.5v4.5h-4.5zM415.4 261.0h4.5v4.5h-4.5zM414.9 263.3h4.5v4.5h-4.5zM414.4 265.6h4.5v4.5h-4.5zM413.9 267.9h4.5v4.5h-4.5zM413.4 270.2h4.5v4.5h-4.5zM412.9 272.5h4.5v4.5h-4.5zM412.4 274.8h4.5v4.5h-4.5zM409.4 284.6h4.5v4.5h-4.5zM408.7 286.6h4.5v4.5h-4.5zM408.0 288.6h4.5v4.5h-4.5zM407.3 290.7h4.5v4.5h-4.5zM406.6 292.7h4.5v4.5h-4.5zM405.9 294.7h4.5v4.5h-4.5zM405.2 296.7h4.5v4.5h-4.5zM404.5 298.8h4.5v4.5h-4.5zM403.8 300.8h4.5v4.5h-4.5zM403.1 302.8h4.5v4.5h-4.5zM402.4 304.9h4.5v4.5h-4.5zM401.7 306.9h4.5v4.5h-4.5zM401.0 308.9h4.5v4.5h-4.5zM400.3 310.9h4.5v4.5h-4.5zM399.6 313.0h4.5v4.5h-4.5zM462.3 245.8h4.5v4.5h-4.5zM461.6 248.0h4.5v4.5h-4.5zM460.9 250.3h4.5v4.5h-4.5zM460.2 252.6h4.5v4.5h-4.5zM459.5 254.9h4.5v4.5h-4.5zM458.8 257.1h4.5v4.5h-4.5z" fill="#ff0000"/><path d="M769.9 345.7h4.5v4.5h-4.5z" fill="#ff00ff"/><g font-family="Liberation Sans, sans-serif" font-size="13.7" fill="#ffffff"><text x="407.8" y="270.5">cliff_sensor_right_link</text><text x="438.0" y="265.6">wheel_left_link</text><text x="462.0" y="271.6">caster_back_link</text><text x="452.7" y="282.2">base_footprint</text><text x="430.3" y="290.0">caster_front_link</text><text x="407.8" y="294.0">cliff_sensor_front_link</text><text x="456.0" y="298.5">wheel_right_link</text><text x="432.2" y="307.6">cliff_sensor_left_link</text><text x="478.0" y="266.4">gyro_link</text></g><path d="M445.9 275.4L468.4 262.7" stroke="#0000ff" stroke-width="2.3" fill="none"/><path d="M446.9 298.8L470.3 286.1" stroke="#0000ff" stroke-width="2.3" fill="none"/><path d="M467.4 312.5L491.8 300.8" stroke="#0000ff" stroke-width="2.3" fill="none"/><path d="M506.4 294.9L519.1 314.5" stroke="#0000ff" stroke-width="2.3" fill="none"/><path d="M522.1 277.3L528.9 287.1" stroke="#0000ff" stroke-width="2.3" fill="none"/><path d="M479.1 295.9L489.8 311.5" stroke="#10d010" stroke-width="2.3" fill="none"/><path d="M494.7 299.8L509.4 324.2" stroke="#10d010" stroke-width="2.3" fill="none"/><path d="M501.6 298.8L507.4 311.5" stroke="#10d010" stroke-width="2.3" fill="none"/><path d="M466.4 299.8L477.1 293.9" stroke="#ff0000" stroke-width="2.3" fill="none"/><path d="M475.2 296.9L482.0 295.3" stroke="#ff0000" stroke-width="2.3" fill="none"/><path d="M503.9 245.7L513.7 240.8" stroke="#10d010" stroke-width="2.8"/><defs><linearGradient id="rg" x1="0.1" y1="0.05" x2="0.9" y2="0.95"><stop offset="0" stop-color="#3b3b3b"/><stop offset="0.5" stop-color="#2a2a2a"/><stop offset="1" stop-color="#1f1f1f"/></linearGradient></defs><g transform="translate(494.8 270.2)"><circle r="26.8" fill="url(#rg)"/><circle cx="0.3" cy="-0.6" r="24.5" fill="#1e1e1e"/><path d="M-17 21.500Q0 27.500 17 21.500" fill="none" stroke="#4a4a4a" stroke-width="1.0"/><path d="M-10.500 -13.500L-3.500 -10.500L-16.500 -3.500L-23.500 -0.500" fill="none" stroke="#2f2f2f" stroke-width="0.9"/><path d="M-14 -2L-3 -9" stroke="#353535" stroke-width="0.8"/><path d="M-2 -20.100L18.100 14.200M1.500 -20.100L21.700 11.800" fill="none" stroke="#4a3c2e" stroke-width="0.9" stroke-dasharray="1.2 0.800"/><path d="M6.500 -19.500L11.500 -19L25 2.500L22.500 8.500z" fill="#171717" stroke="#3c3c3c" stroke-width="0.600"/><path d="M10.500 -15L14 -14L17 -8L13.500 -9z" fill="#0c0c0c" stroke="#4a4a4a" stroke-width="0.500"/><path d="M14 -8L17.500 -7L19.500 -3L16 -4z" fill="#8a8a8a"/><path d="M17.500 -2L21 -1L23.500 4.500L20 3.500z" fill="#0c0c0c" stroke="#4a4a4a" stroke-width="0.500"/><g fill="#8a5530"><circle cx="-10.300" cy="-13.600" r="0.600"/><circle cx="-17.400" cy="-10.600" r="0.600"/><circle cx="-3.200" cy="-11.200" r="0.600"/><circle cx="-19.800" cy="-7.100" r="0.600"/><circle cx="-16.200" cy="-3.500" r="0.600"/><circle cx="-23.300" cy="-0.600" r="0.600"/><circle cx="9.200" cy="11.200" r="0.600"/><circle cx="16.900" cy="13.600" r="0.600"/><circle cx="-4.400" cy="18.300" r="0.600"/><circle cx="-10.300" cy="22.500" r="0.600"/><circle cx="-2" cy="23.100" r="0.600"/><circle cx="1.500" cy="22.500" r="0.600"/></g><path d="M-3.400 -2.400L-1.200 1.400" stroke="#0a14ff" stroke-width="2.900" stroke-linecap="round"/><circle cx="-5" cy="14.200" r="1.700" fill="#0a14ff"/><circle cx="5.700" cy="18.300" r="1.700" fill="#ff1010"/></g></svg>
</body></html>
